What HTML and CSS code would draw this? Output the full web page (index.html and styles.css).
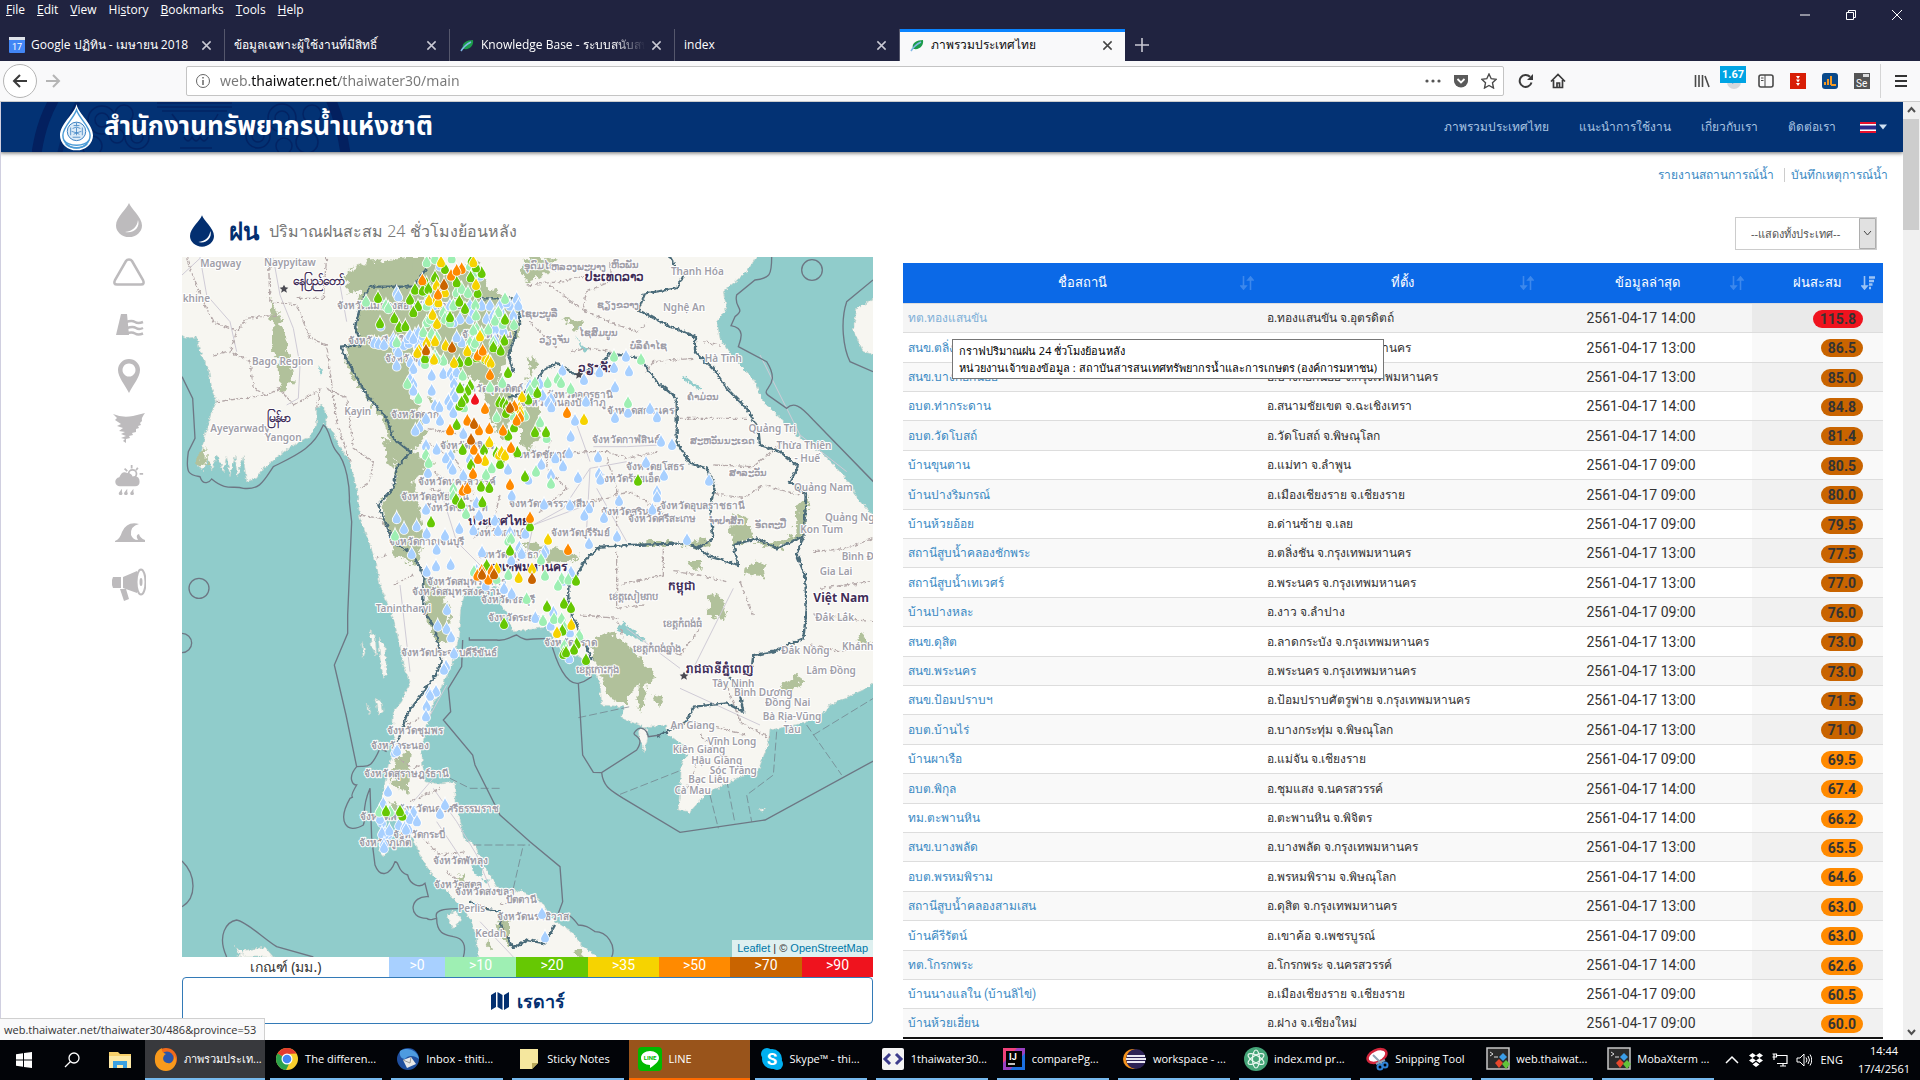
FILE: index.html
```html
<!DOCTYPE html>
<html lang="th">
<head>
<meta charset="utf-8">
<title>ภาพรวมประเทศไทย</title>
<link rel="stylesheet" href="styles.css">
</head>
<body>
<svg class="defs" width="0" height="0" aria-hidden="true">
  <symbol id="drop" viewBox="0 0 26 34"><path d="M13 0C15 6 26 14 26 22.500A13 11.500 0 0 1 0 22.500C0 14 11 6 13 0Z" fill="currentColor"/><path d="M22 17C24.500 24 18 31 9 29C17 28 21 24 22 17Z" fill="#fff"/></symbol>
  <symbol id="close" viewBox="0 0 12 12"><path d="M1.500 1.500l9 9M10.500 1.500l-9 9" fill="none" stroke="currentColor" stroke-width="1.600"/></symbol>
  <symbol id="leaf" viewBox="0 0 16 16"><path d="M4 12C2 6 8 3 14 3C15 8 11 13 5 12Z" fill="#1c9c4a"/><path d="M2 14C5 9 8 7 12 5" stroke="#7fb7e6" stroke-width="1.500" fill="none"/></symbol>
  <symbol id="sort" viewBox="0 0 14 14"><path d="M3.500 0v11M1 10l2.500 3L6 10ZM10.500 14V3M8 4l2.500-3L13 4Z" fill="currentColor" stroke="currentColor" stroke-width="1.600"/></symbol>
  <symbol id="sort-desc" viewBox="0 0 14 14"><path d="M3.500 0v11M1 10l2.500 3L6 10Z" fill="currentColor" stroke="currentColor" stroke-width="1.600"/><path d="M8 1.500h6M8 5h5M8 8.500h3.500M8 12h2" stroke="currentColor" stroke-width="2.400"/></symbol>
  <symbol id="moba" viewBox="0 0 24 24"><rect x="1" y="1" width="22" height="21" fill="#2b2b2b" stroke="#c8c8c8" stroke-width="1.500"/><path d="M4 5l3 2-3 2M8 10h4" stroke="#ddd" fill="none"/><path d="M17 6l4 4-4 4-4-4Z" fill="#3a9de8"/><path d="M13 12l4 4-4 5-4-5Z" fill="#e8472b"/><path d="M20 13l4 4-4 5-4-5Z" fill="#61c33a"/></symbol>
</svg>

<header class="browser">
  <div class="titlebar">
    <nav class="menus"><a href="#"><u>F</u>ile</a><a href="#"><u>E</u>dit</a><a href="#"><u>V</u>iew</a><a href="#">Hi<u>s</u>tory</a><a href="#"><u>B</u>ookmarks</a><a href="#"><u>T</u>ools</a><a href="#"><u>H</u>elp</a></nav>
    <div class="window-controls">
      <button aria-label="Minimize"><svg viewBox="0 0 12 12"><path d="M1 6h10" stroke="#fff"/></svg></button>
      <button aria-label="Restore"><svg viewBox="0 0 12 12"><path d="M1.500 3.500h7v7h-7zM3.500 3.500v-2h7v7h-2" fill="none" stroke="#fff"/></svg></button>
      <button aria-label="Close"><svg viewBox="0 0 12 12"><path d="M1 1l10 10M11 1L1 11" stroke="#fff"/></svg></button>
    </div>
  </div>
  <div class="tabs">
    <div class="tab"><svg viewBox="0 0 16 16"><rect width="16" height="16" rx="1" fill="#4286f5"/><rect width="16" height="3" fill="#dfe3ea"/><text x="8" y="13" font-size="9" text-anchor="middle" fill="#fff" font-family="Roboto">17</text></svg><span>Google ปฏิทิน - เมษายน 2018</span><button aria-label="Close tab"><svg><use href="#close"/></svg></button></div>
    <div class="tab"><span>ข้อมูลเฉพาะผู้ใช้งานที่มีสิทธิ์</span><button aria-label="Close tab"><svg><use href="#close"/></svg></button></div>
    <div class="tab"><svg><use href="#leaf"/></svg><span class="fade">Knowledge Base - ระบบสนับสนุน</span><button aria-label="Close tab"><svg><use href="#close"/></svg></button></div>
    <div class="tab"><span>index</span><button aria-label="Close tab"><svg><use href="#close"/></svg></button></div>
    <div class="tab active"><svg><use href="#leaf"/></svg><span>ภาพรวมประเทศไทย</span><button aria-label="Close tab"><svg><use href="#close"/></svg></button></div>
    <button class="new-tab" aria-label="New tab"><svg viewBox="0 0 14 14"><path d="M7 0v14M0 7h14" stroke="#c9c9d3" stroke-width="1.600"/></svg></button>
  </div>
  <div class="toolbar">
    <button class="back" aria-label="Back"><svg viewBox="0 0 16 16"><path d="M15 8H2M8 2L2 8l6 6" fill="none" stroke="#3b3b3b" stroke-width="2"/></svg></button>
    <button class="forward" aria-label="Forward"><svg viewBox="0 0 16 16"><path d="M1 8h13M8 2l6 6-6 6" fill="none" stroke="#b5b5b5" stroke-width="2"/></svg></button>
    <div class="urlbar">
      <svg viewBox="0 0 16 16"><circle cx="8" cy="8" r="6.500" fill="none" stroke="#666"/><path d="M8 7v5M8 4v1.500" stroke="#666" stroke-width="1.500"/></svg>
      <input class="url" aria-label="Address" value="web.thaiwater.net/thaiwater30/main">
      <svg viewBox="0 0 16 16"><g fill="#555"><circle cx="2" cy="8" r="1.600"/><circle cx="8" cy="8" r="1.600"/><circle cx="14" cy="8" r="1.600"/></g></svg>
      <svg viewBox="0 0 16 16"><path d="M1 2h14v6a7 6.500 0 0 1-14 0Z" fill="#5a5a5a"/><path d="M4.500 6L8 9.500 11.500 6" fill="none" stroke="#fff" stroke-width="1.800"/></svg>
      <svg viewBox="0 0 16 16"><path d="M8 1l2.200 4.700 5 .600-3.700 3.500 1 5.200L8 12.500 3.500 15l1-5.200L.800 6.300l5-.600Z" fill="none" stroke="#4a4a4a" stroke-width="1.400"/></svg>
    </div>
    <button aria-label="Reload"><svg viewBox="0 0 16 16"><path d="M13.500 9.500A6 6 0 1 1 12 3.700" fill="none" stroke="#3b3b3b" stroke-width="2"/><path d="M15 1v6H9Z" fill="#3b3b3b"/></svg></button>
    <button aria-label="Home"><svg viewBox="0 0 16 16"><path d="M1 8.500L8 1.500l7 7M3.500 7v7.500h9V7M7 14v-4h2.500v4" fill="none" stroke="#3b3b3b" stroke-width="1.700"/></svg></button>
    <div class="extensions">
      <button aria-label="Library"><svg viewBox="0 0 16 16"><path d="M1.500 2v12M5 2v12M8.500 2v12M11 3l4 11" stroke="#4a4a4a" stroke-width="1.600" fill="none"/></svg></button>
      <button class="counter" aria-label="Page rank"><svg viewBox="0 0 16 16"><circle cx="8" cy="9" r="7" fill="#d5d8dc"/><path d="M6 10l4-3" stroke="#3b8ad0" stroke-width="2"/></svg><b>1.67</b></button>
      <button aria-label="Sidebar"><svg viewBox="0 0 16 16"><rect x="1" y="2" width="14" height="12" rx="2" fill="none" stroke="#4a4a4a" stroke-width="1.600"/><path d="M7 2v12M3 5h2.500M3 7.500h2.500" stroke="#4a4a4a"/></svg></button>
      <button aria-label="Flash"><svg viewBox="0 0 16 16"><path d="M0 0h16v16H0z" fill="#d81e06"/><path d="M6 3h4L8 6ZM6 6.500h4L8 9.500ZM6 10h4l-2 3Z" fill="#fff"/></svg></button>
      <button aria-label="Rank chart"><svg viewBox="0 0 16 16"><rect width="16" height="16" rx="3" fill="#0b4a8a"/><path d="M3 12V9M6 12V6M9 12V3M9 12h5" stroke="#f59a23" stroke-width="2" fill="none"/></svg></button>
      <button aria-label="Selenium"><svg viewBox="0 0 16 16"><path d="M0 0h16v16H0z" fill="#555"/><path d="M9 1h6v3H9z" fill="#ddd"/><text x="2" y="14" font-size="10" fill="#fff" font-family="Roboto">Se</text></svg></button>
      <button class="menu-btn" aria-label="Menu"><svg viewBox="0 0 16 16"><path d="M2 3h12M2 8h12M2 13h12" stroke="#333" stroke-width="2"/></svg></button>
    </div>
  </div>
</header>

<main class="viewport">
  <div class="page">
    <header class="site-header">
      <svg class="emblem" viewBox="0 0 330 50"><g fill="none" stroke="#03205f"><path d="M4 55C8 25 16 8 24 -6M314 55C310 25 304 8 297 -6" stroke-width="10"/><path d="M27 55C32 30 38 15 46 0" stroke-width="5" opacity=".7"/><g stroke-width="1.500" opacity=".8"><circle cx="70" cy="18" r="14"/><circle cx="92" cy="12" r="9"/><circle cx="70" cy="18" r="7"/><circle cx="105" cy="35" r="12"/><circle cx="105" cy="35" r="6"/><circle cx="60" cy="44" r="10"/><circle cx="85" cy="34" r="7"/><circle cx="250" cy="16" r="14"/><circle cx="250" cy="16" r="7"/><circle cx="226" cy="34" r="12"/><circle cx="226" cy="34" r="6"/><circle cx="275" cy="40" r="11"/><circle cx="252" cy="44" r="8"/><circle cx="280" cy="12" r="9"/><path d="M125 1h75M125 5h75M130 9h65M140 12q10 16 24 18 14-2 22-18M150 30h28M152 35q4 8 8 0 4 8 8 0 4 8 8 0M148 46h32"/></g></g></svg>
      <a class="brand" href="#">
        <svg viewBox="0 0 36 48"><path d="M18 0C20 10 35 20 35 32A17 15.500 0 0 1 1 32C1 20 16 10 18 0Z" fill="#fff"/><path d="M18 6C21 15 32 23 32 32A14 13 0 0 1 4 32C4 23 15 15 18 6Z" fill="none" stroke="#4b9bd6" stroke-width="1.500"/><circle cx="18" cy="28" r="9.500" fill="#dcebf8" stroke="#3a7fc0"/><path d="M18 19v3M15 22h6M14 25q4-3 8 0M13 28q5 3 10 0M15 31q3-3 6 0M14 34h8M12 24v8M24 24v8M18 24v8" stroke="#3a7fc0" fill="none" stroke-width=".800"/><path d="M5 37c5 7 21 7 26 0M7 41c5 5 17 5 22 0" stroke="#4b9bd6" stroke-width="1.600" fill="none"/></svg>
        <span>สำนักงานทรัพยากรน้ำแห่งชาติ</span>
      </a>
      <nav class="site-nav"><a href="#">ภาพรวมประเทศไทย</a><a href="#">แนะนำการใช้งาน</a><a href="#">เกี่ยวกับเรา</a><a href="#">ติดต่อเรา</a>
        <button class="lang" aria-label="ภาษา"><svg viewBox="0 0 28 11"><path d="M0 0h16v11H0z" fill="#e8112d"/><path d="M0 2h16v7H0z" fill="#fff"/><path d="M0 3.500h16v4H0z" fill="#2d2a8c"/><path d="M19 2.500h8l-4 5Z" fill="#cfe0f2"/></svg></button>
      </nav>
    </header>
    <nav class="quick-links"><a href="#">รายงานสถานการณ์น้ำ</a><a href="#">บันทึกเหตุการณ์น้ำ</a></nav>

    <div class="content">
      <nav class="rail">
        <a href="#" aria-label="ฝน"><svg class="tall" viewBox="0 0 26 34"><use href="#drop"/></svg></a>
        <a href="#" aria-label="เตือนภัย"><svg viewBox="0 0 34 30"><path d="M17 2.500Q19 2.500 20 4L31 23Q33 27.500 29 27.500H5Q1 27.500 3 23L14 4Q15 2.500 17 2.500Z" fill="none" stroke="currentColor" stroke-width="2.500"/></svg></a>
        <a href="#" aria-label="เขื่อน"><svg viewBox="0 0 34 30"><path d="M9 5h6l2 21H4Z" fill="currentColor"/><path d="M14 13q6-2 9 0t8 0M15 19q6-2 9 0t7 0M14 24.500q6-2 9 0t8 0" stroke="currentColor" stroke-width="2.500" fill="none"/></svg></a>
        <a href="#" aria-label="สถานี"><svg class="tall" viewBox="0 0 26 34"><path d="M13 0A11 11 0 0 1 24 11C24 18 17 26 13 34C9 26 2 18 2 11A11 11 0 0 1 13 0ZM13 4.500a6.500 6.500 0 1 0 .01 0Z" fill="currentColor" fill-rule="evenodd"/></svg></a>
        <a href="#" aria-label="พายุ"><svg viewBox="0 0 34 30"><path d="M1 1Q10 5 21 3L33 0Q29 5 30 8L28 10 29 12 26 13 27 15 24 16 24 19 20 20 21 22 17 23 18 25 14 26 14 30 11 28 13 26 9 25 14 23 9 21 13 19 7 18 11 15 5 13 9 11 3 7 5 5Z" fill="currentColor"/></svg></a>
        <a href="#" aria-label="คาดการณ์ฝน"><svg viewBox="0 0 34 34"><circle cx="21" cy="10" r="4.500" fill="none" stroke="currentColor" stroke-width="2"/><path d="M20 0v4M27 3l-2 3M29 10h4M12 4l3 3" stroke="currentColor" stroke-width="2"/><path d="M7 24A5 5 0 0 1 6 14Q9 6 15 9Q20 9 21 13Q29 12 29 19Q29 24 24 24ZM9 27v4a2 2 0 1 1-3 0ZM15 27v4a2 2 0 1 1-3 0ZM22 27v4a2 2 0 1 1-3 0Z" fill="currentColor"/></svg></a>
        <a href="#" aria-label="คลื่น"><svg viewBox="0 0 34 30"><path d="M3 24Q8 22 10 15Q15 4 27 7Q18 9 19 18Q21 23 26 23Q23 18 27 17Q28 21 33 23v2H3Z" fill="currentColor"/></svg></a>
        <a href="#" aria-label="ประกาศ"><svg class="tall" viewBox="0 0 34 34"><path d="M1 10h8v11H1l-1-3v-5ZM11 10L25 4V26L11 21ZM8 22h6l3 10-5 2Z" fill="currentColor"/><ellipse cx="29" cy="15" rx="4.500" ry="12.500" fill="none" stroke="currentColor" stroke-width="2"/><ellipse cx="29" cy="15" rx="1.500" ry="4" fill="currentColor"/></svg></a>
      </nav>

      <section class="map-col">
        <h1 class="map-title"><svg><use href="#drop"/></svg><b>ฝน</b><small>ปริมาณฝนสะสม 24 ชั่วโมงย้อนหลัง</small></h1>
        <div class="map">
          <svg class="map-art" viewBox="6 6 2073 2100" preserveAspectRatio="xMidYMid slice">
            <defs>
              <filter id="coast" x="0" y="0" width="100%" height="100%"><feTurbulence type="fractalNoise" baseFrequency=".09" numOctaves="3" seed="4"/><feDisplacementMap in="SourceGraphic" scale="14" xChannelSelector="R" yChannelSelector="G"/></filter>
              <filter id="patch" x="-10%" y="-10%" width="120%" height="120%"><feTurbulence type="fractalNoise" baseFrequency=".05" numOctaves="4" seed="9"/><feDisplacementMap in="SourceGraphic" scale="36" xChannelSelector="R" yChannelSelector="G"/></filter>
              <path id="marker" d="M0-18C3-9 12-1 12 6A12 11 0 0 1-12 6C-12-1-3-9 0-18Z"/>
            </defs>
            <g filter="url(#coast)">
              <path class="land" d="M-40-40H-40V210L20 250 50 245 60 290 85 340 95 400 110 440 95 470 75 540 65 590 52 630 70 645 85 610 95 645 110 600 130 650 140 605 150 665 165 600 172 668 190 605 200 680 230 670 250 640 270 625 330 575 390 545 410 510 410 460 425 450 440 480 435 510 460 530 470 560 490 590 510 620 530 700 540 790 555 830 570 870 590 930 600 990 620 1040 640 1090 660 1170 670 1230 690 1280 665 1340 640 1370 638 1430 652 1475 625 1530 612 1600 600 1660 606 1715 640 1660 670 1730 700 1750 720 1800 750 1850 800 1910 850 1960 875 2000 890 2050 895 2140H1290L1255 2106 1210 2075 1170 2025 1125 2000 1080 1935 1020 1905 1000 1912 950 1895 930 1860 905 1820 885 1770 850 1750 840 1690 825 1640 825 1580 780 1587 735 1580 728 1530 725 1480 740 1415 755 1355 795 1275 820 1215 835 1155 842 1065 855 1010 875 1000 945 995 972 1010 962 1050 985 1080 1000 1130 1100 1117 1130 1165 1170 1195 1220 1215 1260 1280 1265 1350 1330 1355 1325 1390 1390 1415 1460 1410 1460 1435 1530 1485 1505 1525 1495 1665 1530 1670 1580 1615 1660 1575 1735 1545 1765 1465 1770 1425 1870 1405 1930 1375 1950 1350 2060 1300 2120 1250V800L2080 780 2040 740 1990 660 1920 590 1860 550 1780 470 1750 440 1720 370 1670 320 1620 250 1610 200 1640 160 1630 110 1700 50 1760-40Z"/>
              <path class="land" d="M2120 110L2075 135 2030 160 2020 225 2050 290 2120 305ZM600 1735l20 5 5 35-12 30-14-15ZM170 2106l25-20 60-10 25 30ZM165 2070l20 20 8 16h-10ZM1375 1425l25-5 3 30-10 40-15-35ZM570 1130l15 10 5 60-15-20ZM595 1150l20 20 5 90-10 10-10-60ZM545 1160l10 30-5 20ZM585 1330l20 10 5 30-15 10ZM562 1345l10 25-5 10ZM800 1985l25-20 20 30-25 25ZM1735 1665l20-8-8 12Z"/>
              <path class="water" d="M415 330l12 20-5 12ZM1185 240l20 30 25 15-20 5ZM1510 360l60 45-20-5-45-30ZM1330 1100l70 60-20-5-70-30ZM870 1810l40 15-5 40-25-10ZM905 1870l25 5-10 10Z"/>
            </g>
            <g class="forest" filter="url(#patch)">
              <path d="M540 90L600 60 690 40 690 6H780L800 60 900 20 925 100 1010 140 1020 220 980 300 960 380 1000 440 980 560 940 520 900 380 840 360 760 290 700 250 690 400 720 470 740 560 690 590 760 620 700 680 720 760 730 840 710 930 640 900 640 850 600 770 610 740 640 700 650 640 630 560 600 480 540 400 500 330 500 270 540 260 530 200Z"/>
              <path d="M265 130L295 170 320 260 335 350 340 390 300 410 295 310 270 280 280 210ZM500 50L560 20 700 8 690 80 560 100 500 120ZM610 545L650 580 640 640 620 620ZM55 590l25-10v45l-25 10ZM730 970l40 0 40 100-5 90-30 10-40-80 5-60ZM1020 430l50-20 10 120-30 60-30-20ZM1020 860l60 10 120 30-30 25-90-10ZM1025 10h110l-40 50-60 20ZM1150 190l60 10-20 30ZM1050 300l20 20-30 70ZM1720 865l70 20 80-45 15-120-30 30-10 90-60 20ZM1650 775l50 10 20 60-60 30ZM1520 915l40 0 10 25-30 5ZM1700 930l50-5 5 40-60-10ZM1590 1010l40 30 10 50-60-10ZM1230 1160l60-30 80 60 60 80-60 20-30 60-50-20-40-90ZM1380 1260l20 20-10 100-20-30ZM1800 1290l50-30 20 30-60 30ZM650 1500l45 0-10 120-50-40ZM670 1470l20 30-10 40ZM630 1640l30 20-10 30ZM830 1870l20-20 10 30ZM950 1980l40 20 0 80-30-40ZM1190 2085h20v25h-20ZM1420 1320l30 10-10 30ZM2030 1140l20-5 20 40-30-5ZM1500 870l80-20 10 20-70 10ZM1380 860l90-5v15h-90ZM800 550l30 40-30-10ZM750 420l30 60-20-10ZM930 2050l10 40-20-20Z"/>
            </g>
            <g class="roads"><path d="M280 10L300 120 340 220 360 330 355 430 320 450M6 60L60 10M60 6L80 120 150 200 170 290M950 960L1040 900 1060 810 1220 750M1240 575H1340L1440 570M1230 640L1220 820M1060 810L1150 760 1230 640 1340 620M1340 860L1250 700M760 1600L830 1700 890 1800 930 1900M700 1640L760 1570M770 1700L850 1820M1500 1300L1740 1410M1530 1260L1660 1000M1740 300L1860 540 2000 650M660 990L690 1250M800 1290L740 1400M900 2000L1000 2106M480 90L500 200M780 700L830 860 930 960M1340 1120L1500 1240M1180 480L1230 620"/></g>
            <g class="provinces" filter="url(#coast)"><path d="M20 10L60 120 100 200 170 230 200 190 290 180M170 230L150 290 210 320 220 400 260 420 300 400 340 450 410 410M265 6L270 140 350 150 390 250 440 270 470 500 510 620M350 130L430 130 440 6M440 400L500 430 520 580 580 620 570 680 540 700M100 300L140 290M260 420L110 440M540 780L600 790 620 820M410 460L420 400M390 70L440 90M1110 90L1200 160 1310 210 1370 230 1400 205M1210 160L1220 110 1290 80 1290 20M1040 90L1140 80 1230 60M1170 290L1230 280 1300 290M1400 350L1420 320 1540 310M1490 490H1700M1600 630L1720 635 1810 560M1600 715L1690 730 1750 690 1860 720M1110 600L1220 590 1280 590 1340 610 1440 590M1280 610L1310 700 1310 860M1110 550L1100 640 1160 700 1080 770M1230 740L1350 710 1430 760 1480 800M1450 880V960L1320 990M1310 890V1060L1390 1050M1480 950L1560 960 1640 980M1560 1120L1500 1200 1440 1170M1680 980L1720 1080M1200 1080L1310 1090 1330 1150M1900 890L2000 880 2080 850M1920 1000L2070 980M1900 1080L2080 1100M1890 1170L1980 1190 2080 1160M1540 1400L1700 1440M1560 1440L1700 1560M1560 1500L1520 1600M1640 1290L1680 1400 1770 1450M740 560L830 620 880 720M760 650L830 700M700 960L640 990M750 700L880 740M680 1410L720 1390M640 1500L700 1540 720 1530M690 1640L780 1600M720 1740L780 1800 860 1790M800 1850L860 1900M960 1950L1050 1930M1050 200L1130 280M1570 260L1620 270M740 520L850 540M960 720L940 800 880 850M620 900L590 910"/></g>
            <g class="nations" filter="url(#coast)"><path d="M740 40L700 95 570 95 545 140 525 215 545 270 480 275 520 350 560 420 620 490 640 550 690 590 650 640 640 700 595 750 640 860 700 900 730 960 730 1065 765 1120 785 1220 770 1255 680 1380 650 1470M900 130L1015 130 1020 200 985 300 1000 350M985 430L1060 400 1090 345 1130 325 1190 360 1260 330 1290 295 1380 310 1430 380 1490 430 1490 560 1530 625 1580 640 1605 690 1590 760 1600 850 1555 880 1520 865 1350 870 1260 875 1220 910 1190 960 1165 990 1165 1060 1200 1130 1235 1215M1555 880L1590 905 1640 920 1675 930 1660 870 1730 850 1790 880 1870 845 1850 900 1875 960 1880 1065 1870 1150 1780 1190 1720 1200 1715 1240M1640 1250L1680 1320 1690 1370 1640 1345 1540 1355 1520 1400 1430 1445M1470 6L1490 40 1510 60 1490 100 1395 115 1375 165 1460 210 1545 245 1545 290 1600 340 1640 400 1700 460 1735 520 1740 570 1800 590 1855 635 1830 680 1880 720 1870 845M870 1940L910 1960 960 1970 965 2020 1000 2080 1040 2055 1095 2065 1125 2010"/></g>
            <g class="maritime">
              <path d="M6 365L38 430 45 550 25 590C15 660 30 660 60 665C70 695 90 680 95 672C140 710 160 690 190 700C240 705 250 680 280 635C350 600 400 580 430 510C450 520 450 570 470 590C500 620 510 700 508 740L515 800 503 1080V1135L463 1230 498 1380 530 1535C560 1530 570 1550 600 1480L620 1490M530 1535C500 1570 520 1590 530 1590C500 1640 530 1620 510 1630C470 1700 500 1740 550 1710C560 1690 540 1670 570 1600L575 1750 585 1830C600 1870 630 1860 645 1820C660 1820 650 1850 683 1860C690 1890 720 1900 735 1885L745 1925C690 1920 680 1990 740 1990C750 2000 760 1990 770 1990C770 2040 800 2040 820 2045C850 2050 860 2070 850 2106M770 1990C760 1960 800 1960 880 1960M140 2106C110 2040 140 2000 170 1995C200 2000 250 2050 290 2075L400 2106M6 1818C50 1860 50 1930 6 1955M868 1147V1155H950C980 1160 1000 1140 1010 1140C1030 1155 1040 1155 1060 1152L1110 1150C1130 1230 1160 1290 1195 1285C1220 1280 1225 1270 1235 1265M1195 1285L1208 1500 1240 1552 1265 1553 1370 1485C1400 1440 1350 1445 1365 1430C1380 1410 1400 1420 1405 1445L1440 1440M1265 1553C1270 1600 1300 1610 1330 1630L1500 1732 1755 1695 2080 1518M848 1155L845 1235 805 1300 812 1370 790 1395 878 1500 885 1530 960 1680 1050 1760 1140 1835 1148 1940 1135 1975C1170 1975 1180 1990 1195 2010C1220 2010 1230 2020 1245 2030C1280 2030 1310 2070 1295 2106"/>
              <path d="M1775 6C1775 60 1770 70 1725 75L1670 120C1660 160 1700 160 1665 185L1653 212C1700 220 1680 260 1675 275L1760 320C1810 400 1730 400 1770 425L1820 460C1840 440 1860 450 1900 495L2080 680M2079 75L2000 140C1980 200 1990 280 2010 320L2079 350"/>
              <circle cx="57" cy="1000" r="30"/><circle cx="1896" cy="45" r="31"/><path d="M6 1135a28 28 0 0 1 0 58"/>
              <path class="dash" d="M1195 1388L1350 1355M1320 1618L1500 1547M1640 1575L1665 1705M1590 1620L1615 1720M1790 1430L1780 1560 1700 1620 1715 1700M1880 1410L1985 1560M1900 1440L2080 1330M810 1570L870 1600 960 1600M880 1770L1050 1770M1000 1900L1030 1770"/>
            </g>
            <g class="labels">
              <text x="122" y="36">Magway</text><text x="330" y="34">Naypyitaw</text><text x="8" y="142" text-anchor="start">khine</text><text x="308" y="329">Bago Region</text><text x="180" y="531">Ayeyarwady</text><text x="310" y="557">Yangon</text><text x="533" y="480">Kayin</text><text x="670" y="1070">Tanintharyi</text>
              <text x="1552" y="60">Thanh Hóa</text><text x="1512" y="169">Nghệ An</text><text x="1630" y="322">Hà Tĩnh</text><text x="1777" y="531">Quảng Trị</text><text x="1872" y="582">Thừa Thiên</text><text x="1882" y="621">- Huế</text><text x="1930" y="708">Quảng Nam</text><text x="1935" y="798" class="start">Quảng Ng</text><text x="1925" y="834">Kon Tum</text><text x="1985" y="914" class="start">Bình Đ</text><text x="1968" y="960">Gia Lai</text><text x="1964" y="1098">Đắk Lắk</text><text x="1876" y="1196">Đắk Nông</text><text x="1986" y="1186" class="start">Khánh</text><text x="1953" y="1257">Lâm Đồng</text><text x="1660" y="1296">Tây Ninh</text><text x="1750" y="1322">Bình Dương</text><text x="1823" y="1353">Đồng Nai</text><text x="1836" y="1395">Bà Rịa-Vũng</text><text x="1836" y="1434">Tàu</text><text x="1538" y="1421">An Giang</text><text x="1656" y="1471">Vĩnh Long</text><text x="1557" y="1494">Kiên Giang</text><text x="1610" y="1527">Hậu Giang</text><text x="1660" y="1558">Sóc Trăng</text><text x="1586" y="1584">Bạc Liêu</text><text x="1538" y="1616">Cà Mau</text><text x="875" y="1972">Perlis</text><text x="932" y="2047">Kedah</text>
              <text x="590" y="162">จังหวัดแม่ฮ่องสอน</text><text x="810" y="162">จังหวัดเชียงราย</text><text x="610" y="266">จังหวัดเชียงใหม่</text><text x="700" y="322">จังหวัดลำพูน</text><text x="920" y="250">จังหวัดน่าน</text><text x="930" y="412">จังหวัดอุตรดิตถ์</text><text x="704" y="490">จังหวัดตาก</text><text x="862" y="582">จังหวัดพิจิตร</text><text x="830" y="690">จังหวัดนครสวรรค์</text><text x="765" y="734">จังหวัดอุทัยธานี</text><text x="830" y="768">จังหวัดชัยนาท</text><text x="740" y="870">จังหวัดกาญจนบุรี</text><text x="960" y="842">จังหวัดลพบุรี</text><text x="995" y="908">จังหวัดปทุมธานี</text><text x="860" y="990">จังหวัดสมุทรสาคร</text><text x="833" y="1020">จังหวัดสมุทรสงคราม</text><text x="985" y="1044">จังหวัดชลบุรี</text>
              <text x="1200" y="429">จังหวัดอุดรธานี</text><text x="1150" y="454">จังหวัดหนองบัวลำภู</text><text x="1382" y="478">จังหวัดสกลนคร</text><text x="1338" y="563">จังหวัดกาฬสินธุ์</text><text x="1080" y="608">จังหวัดชัยภูมิ</text><text x="1424" y="645">จังหวัดยโสธร</text><text x="1348" y="682">จังหวัดร้อยเอ็ด</text><text x="1115" y="756">จังหวัดนครราชสีมา</text><text x="1566" y="761">จังหวัดอุบลราชธานี</text><text x="1354" y="780">จังหวัดสุรินทร์</text><text x="1446" y="800">จังหวัดศรีสะเกษ</text><text x="1200" y="842">จังหวัดบุรีรัมย์</text><text x="1172" y="1173">จังหวัดตราด</text><text x="1010" y="1098">จังหวัดระยอง</text>
              <text x="806" y="1204">จังหวัดประจวบคีรีขันธ์</text><text x="704" y="1436">จังหวัดชุมพร</text><text x="660" y="1481">จังหวัดระนอง</text><text x="680" y="1565">จังหวัดสุราษฎร์ธานี</text><text x="806" y="1670">จังหวัดนครศรีธรรมราช</text><text x="620" y="1694">จังหวัดพังงา</text><text x="716" y="1750">จังหวัดกระบี่</text><text x="615" y="1773">จังหวัดภูเก็ต</text><text x="840" y="1826">จังหวัดพัทลุง</text><text x="834" y="1898">จังหวัดสตูล</text><text x="914" y="1920">จังหวัดสงขลา</text><text x="1025" y="1945">ปัตตานี</text><text x="1060" y="1996">จังหวัดนราธิวาส</text>
              <text x="1080" y="42">ອຸດົມໄຊ</text><text x="1195" y="44">ຫລວງພະບາງ</text><text x="1335" y="38">ຫົວພັນ</text><text x="1314" y="160">ຊຽງຂວາງ</text><text x="1076" y="185">ໄຊຍະບູລີ</text><text x="1124" y="264">ວຽງຈັນ</text><text x="1256" y="242">ໄຊສົມບູນ</text><text x="1406" y="282">ບໍລິຄຳໄຊ</text><text x="1570" y="436">ຄຳມ່ວນ</text><text x="1627" y="568">ສະຫວັນນະເຂດ</text><text x="1705" y="664">ສາລະວັນ</text><text x="1638" y="808">ຈຳປາສັກ</text><text x="1770" y="818">ອັດຕະປື</text>
              <text x="1360" y="1034">ខេត្តសៀមរាប</text><text x="1507" y="1117">ខេត្តកំពង់ធំ</text><text x="1432" y="1190">ខេត្តកំពង់ឆ្នាំង</text><text x="1252" y="1254">ខេត្តកោះកុង</text>
              <g class="country"><text x="415" y="90">နေပြည်တော်</text><text x="296" y="500">မြန်မာ</text><text x="1302" y="77">ປະເທດລາວ</text><text x="1252" y="350">ວຽງຈັນ</text><text x="955" y="809">ประเทศไทย</text><text x="1035" y="947">กรุงเทพมหานคร</text><text x="1506" y="1004">កម្ពុជា</text><text x="1617" y="1253">រាជធានីភ្នំពេញ</text><text x="1900" y="1040" class="start">Việt Nam</text></g>
            </g>
            <g class="stars"><path id="star" d="M312 89l4 8 9 1-7 6 3 9-9-5-9 5 3-9-7-6 9-1Z"/><use href="#star" x="885" y="258"/><use href="#star" x="1200" y="1161"/></g>
            <g id="markers"></g>
          </svg>
          <p class="attribution"><a href="#">Leaflet</a> | © <a href="#">OpenStreetMap</a></p>
        </div>
        <div class="legend"><span>เกณฑ์ (มม.)</span><i class="l0">&gt;0</i><i class="l10">&gt;10</i><i class="l20">&gt;20</i><i class="l35">&gt;35</i><i class="l50">&gt;50</i><i class="l70">&gt;70</i><i class="l90">&gt;90</i></div>
        <button class="radar"><svg viewBox="0 0 18 18"><path d="M0 3l5-3v15l-5 3ZM6.500 0l5 3v15l-5-3ZM13 3l5-3v15l-5 3Z" fill="currentColor"/></svg>เรดาร์</button>
      </section>

      <section class="data-col">
        <div class="filter"><select aria-label="จังหวัด"><option>--แสดงทั้งประเทศ--</option></select><svg viewBox="0 0 17 31"><path d="M.500.500h16v30H.500z" fill="#e1e1e1" stroke="#adadad"/><path d="M5 13l3.500 4 3.500-4" fill="none" stroke="#444"/></svg></div>
        <div class="table-wrap">
          <table>
            <colgroup><col class="c1"><col class="c2"><col class="c3"><col class="c4"></colgroup>
            <thead><tr>
              <th><button><span>ชื่อสถานี</span><svg><use href="#sort"/></svg></button></th>
              <th><button><span>ที่ตั้ง</span><svg><use href="#sort"/></svg></button></th>
              <th><button><span>ข้อมูลล่าสุด</span><svg><use href="#sort"/></svg></button></th>
              <th><button class="sorted"><span>ฝนสะสม</span><svg><use href="#sort-desc"/></svg></button></th>
            </tr></thead>
            <tbody>
              <tr class="hover"><td><a href="#">ทต.ทองแสนขัน</a></td><td>อ.ทองแสนขัน จ.อุตรดิตถ์</td><td>2561-04-17 14:00</td><td><b class="l90">115.8</b></td></tr>
              <tr><td><a href="#">สนข.ตลิ่งชัน</a></td><td>อ.ตลิ่งชัน จ.กรุงเทพมหานคร</td><td>2561-04-17 13:00</td><td><b class="l70">86.5</b></td></tr>
              <tr><td><a href="#">สนข.บางกอกน้อย</a></td><td>อ.บางกอกน้อย จ.กรุงเทพมหานคร</td><td>2561-04-17 13:00</td><td><b class="l70">85.0</b></td></tr>
              <tr><td><a href="#">อบต.ท่ากระดาน</a></td><td>อ.สนามชัยเขต จ.ฉะเชิงเทรา</td><td>2561-04-17 14:00</td><td><b class="l70">84.8</b></td></tr>
              <tr><td><a href="#">อบต.วัดโบสถ์</a></td><td>อ.วัดโบสถ์ จ.พิษณุโลก</td><td>2561-04-17 14:00</td><td><b class="l70">81.4</b></td></tr>
              <tr><td><a href="#">บ้านขุนตาน</a></td><td>อ.แม่ทา จ.ลำพูน</td><td>2561-04-17 09:00</td><td><b class="l70">80.5</b></td></tr>
              <tr><td><a href="#">บ้านปางริมกรณ์</a></td><td>อ.เมืองเชียงราย จ.เชียงราย</td><td>2561-04-17 09:00</td><td><b class="l70">80.0</b></td></tr>
              <tr><td><a href="#">บ้านห้วยอ้อย</a></td><td>อ.ด่านซ้าย จ.เลย</td><td>2561-04-17 09:00</td><td><b class="l70">79.5</b></td></tr>
              <tr><td><a href="#">สถานีสูบน้ำคลองชักพระ</a></td><td>อ.ตลิ่งชัน จ.กรุงเทพมหานคร</td><td>2561-04-17 13:00</td><td><b class="l70">77.5</b></td></tr>
              <tr><td><a href="#">สถานีสูบน้ำเทเวศร์</a></td><td>อ.พระนคร จ.กรุงเทพมหานคร</td><td>2561-04-17 13:00</td><td><b class="l70">77.0</b></td></tr>
              <tr><td><a href="#">บ้านปางหละ</a></td><td>อ.งาว จ.ลำปาง</td><td>2561-04-17 09:00</td><td><b class="l70">76.0</b></td></tr>
              <tr><td><a href="#">สนข.ดุสิต</a></td><td>อ.ลาดกระบัง จ.กรุงเทพมหานคร</td><td>2561-04-17 13:00</td><td><b class="l70">73.0</b></td></tr>
              <tr><td><a href="#">สนข.พระนคร</a></td><td>อ.พระนคร จ.กรุงเทพมหานคร</td><td>2561-04-17 13:00</td><td><b class="l70">73.0</b></td></tr>
              <tr><td><a href="#">สนข.ป้อมปราบฯ</a></td><td>อ.ป้อมปราบศัตรูพ่าย จ.กรุงเทพมหานคร</td><td>2561-04-17 13:00</td><td><b class="l70">71.5</b></td></tr>
              <tr><td><a href="#">อบต.บ้านไร่</a></td><td>อ.บางกระทุ่ม จ.พิษณุโลก</td><td>2561-04-17 13:00</td><td><b class="l70">71.0</b></td></tr>
              <tr><td><a href="#">บ้านผาเรือ</a></td><td>อ.แม่จัน จ.เชียงราย</td><td>2561-04-17 09:00</td><td><b class="l50">69.5</b></td></tr>
              <tr><td><a href="#">อบต.พิกุล</a></td><td>อ.ชุมแสง จ.นครสวรรค์</td><td>2561-04-17 14:00</td><td><b class="l50">67.4</b></td></tr>
              <tr><td><a href="#">ทม.ตะพานหิน</a></td><td>อ.ตะพานหิน จ.พิจิตร</td><td>2561-04-17 14:00</td><td><b class="l50">66.2</b></td></tr>
              <tr><td><a href="#">สนข.บางพลัด</a></td><td>อ.บางพลัด จ.กรุงเทพมหานคร</td><td>2561-04-17 13:00</td><td><b class="l50">65.5</b></td></tr>
              <tr><td><a href="#">อบต.พรหมพิราม</a></td><td>อ.พรหมพิราม จ.พิษณุโลก</td><td>2561-04-17 14:00</td><td><b class="l50">64.6</b></td></tr>
              <tr><td><a href="#">สถานีสูบน้ำคลองสามเสน</a></td><td>อ.ดุสิต จ.กรุงเทพมหานคร</td><td>2561-04-17 13:00</td><td><b class="l50">63.0</b></td></tr>
              <tr><td><a href="#">บ้านคีรีรัตน์</a></td><td>อ.เขาค้อ จ.เพชรบูรณ์</td><td>2561-04-17 09:00</td><td><b class="l50">63.0</b></td></tr>
              <tr><td><a href="#">ทต.โกรกพระ</a></td><td>อ.โกรกพระ จ.นครสวรรค์</td><td>2561-04-17 14:00</td><td><b class="l50">62.6</b></td></tr>
              <tr><td><a href="#">บ้านนางแลใน (บ้านลิไข่)</a></td><td>อ.เมืองเชียงราย จ.เชียงราย</td><td>2561-04-17 09:00</td><td><b class="l50">60.5</b></td></tr>
              <tr><td><a href="#">บ้านห้วยเฮี่ยน</a></td><td>อ.ฝาง จ.เชียงใหม่</td><td>2561-04-17 09:00</td><td><b class="l50">60.0</b></td></tr>
            </tbody>
          </table>
          <div class="tooltip" role="tooltip">กราฟปริมาณฝน 24 ชั่วโมงย้อนหลัง<br>หน่วยงานเจ้าของข้อมูล : สถาบันสารสนเทศทรัพยากรน้ำและการเกษตร (องค์การมหาชน)</div>
        </div>
      </section>
    </div>
  </div>
  <div class="scrollbar" aria-hidden="true"><svg viewBox="0 0 17 17"><path d="M5 10l3.500-4 3.500 4" fill="none" stroke="#505050" stroke-width="2"/></svg><span class="thumb"></span><svg class="down" viewBox="0 0 17 17"><path d="M5 7l3.500 4L12 7" fill="none" stroke="#505050" stroke-width="2"/></svg></div>
  <div class="status">web.thaiwater.net/thaiwater30/486&amp;province=53</div>
</main>

<footer class="taskbar">
  <button class="sys" aria-label="Start"><svg viewBox="0 0 16 16"><path d="M0 2.200l7-1v6.300H0ZM8 1l8-1v7.500H8ZM0 8.500h7v6.300l-7-1ZM8 8.500h8V16l-8-1Z" fill="#fff"/></svg></button>
  <button class="sys" aria-label="Search"><svg viewBox="0 0 16 16"><circle cx="10" cy="6" r="5" fill="none" stroke="#fff" stroke-width="1.300"/><path d="M6.500 9.500L1 15" stroke="#fff" stroke-width="1.300"/></svg></button>
  <button class="sys folder" aria-label="File Explorer"><svg viewBox="0 0 22 18"><path d="M0 1h9l2 2h11v14H0Z" fill="#f7d06b"/><path d="M0 5h22v12H0z" fill="#fde9a6"/><path d="M4 17v-7h14v7h-4v-3H8v3Z" fill="#3aa0e0"/></svg></button>
  <div class="apps">
    <button class="app current"><svg viewBox="0 0 24 24"><circle cx="12" cy="12" r="11" fill="#f26a1b"/><circle cx="13" cy="11" r="6.500" fill="#2c56a8"/><path d="M1 10C2 4 6 2 8 1C7 4 9 6 12 7C8 9 8 15 13 16C18 17 21 13 20 8C25 15 20 24 12 24C4 24 0 18 1 10Z" fill="#f89a1c"/></svg><span>ภาพรวมประเท...</span></button>
    <button class="app"><svg viewBox="0 0 24 24"><circle cx="12" cy="12" r="11" fill="#f9cf2c"/><path d="M12 12L2.500 6.500A11 11 0 0 1 21.500 6.500L12 7Z" fill="#e33b2e"/><path d="M12 12L2.500 6.500A11 11 0 0 0 11 23L15 15Z" fill="#2ba24c"/><circle cx="12" cy="12" r="5.500" fill="#fff"/><circle cx="12" cy="12" r="4.300" fill="#4285f4"/></svg><span>The differen...</span></button>
    <button class="app"><svg viewBox="0 0 24 24"><circle cx="12" cy="12" r="11" fill="#1f4f9e"/><path d="M4 4C12-1 22 4 23 12C18 8 12 8 9 12C5 12 3 8 4 4Z" fill="#4d9be0"/><path d="M7 13l8-3 5 7-9 4Z" fill="#e8e8e8"/><path d="M7 13l7 3 1-6" stroke="#999" fill="none"/></svg><span>Inbox - thiti...</span></button>
    <button class="app"><svg viewBox="0 0 24 24"><path d="M3 2h18v14l-6 6H3Z" fill="#f5e79e"/><path d="M21 16l-6 6v-6Z" fill="#b9a95a"/></svg><span>Sticky Notes</span></button>
    <button class="app alert"><svg viewBox="0 0 24 24"><rect width="24" height="24" rx="4" fill="#00b900"/><path d="M12 4C17 4 21 7 21 11C21 15 15 19 12 21V18C7 18 3 15 3 11C3 7 7 4 12 4Z" fill="#fff"/><text x="12" y="13" font-size="6" text-anchor="middle" font-weight="700" fill="#00b900" font-family="Roboto">LINE</text></svg><span>LINE</span></button>
    <button class="app"><svg viewBox="0 0 24 24"><circle cx="12" cy="12" r="10" fill="#00aff0"/><circle cx="7" cy="7" r="6" fill="#00aff0"/><circle cx="17" cy="17" r="6" fill="#00aff0"/><text x="12" y="18" font-size="17" font-weight="700" text-anchor="middle" fill="#fff" font-family="Roboto">S</text></svg><span>Skype™ - thi...</span></button>
    <button class="app"><svg viewBox="0 0 24 24"><rect x="1" y="1" width="22" height="22" rx="2" fill="#f4f4f4"/><path d="M9 7l-5 5 5 5M15 7l5 5-5 5" fill="none" stroke="#3c3c8c" stroke-width="3"/></svg><span>1thaiwater30...</span></button>
    <button class="app"><svg viewBox="0 0 24 24"><path d="M1 1h22v22H1z" fill="#9b3fc0"/><path d="M1 1h14L1 16Z" fill="#f0417a"/><path d="M23 23H8L23 6Z" fill="#1b6fe0"/><path d="M4 4h16v16H4z"/><text x="7" y="13" font-size="9" fill="#fff" font-weight="700" font-family="Roboto">IJ</text><path d="M6 17h7" stroke="#fff" stroke-width="1.500"/></svg><span>comparePg...</span></button>
    <button class="app"><svg viewBox="0 0 24 24"><circle cx="10" cy="12" r="10" fill="#f7941e"/><circle cx="13" cy="12" r="10" fill="#2c2255"/><path d="M4 9h18M3 12h20M4 15h18" stroke="#e8e6f2" stroke-width="1.800"/></svg><span>workspace - ...</span></button>
    <button class="app"><svg viewBox="0 0 24 24"><circle cx="12" cy="12" r="12" fill="#45a578"/><g fill="none" stroke="#e9f7ef" stroke-width="1.200"><ellipse cx="12" cy="12" rx="3.500" ry="9"/><ellipse cx="12" cy="12" rx="3.500" ry="9" transform="rotate(60 12 12)"/><ellipse cx="12" cy="12" rx="3.500" ry="9" transform="rotate(120 12 12)"/></g></svg><span>index.md pr...</span></button>
    <button class="app"><svg viewBox="0 0 24 24"><ellipse cx="12" cy="9" rx="10" ry="6" fill="#fff" stroke="#d3263c" stroke-width="2.500" transform="rotate(-25 12 9)"/><path d="M8 8l9 9M20 13l-9 4" stroke="#8fa3b5" stroke-width="2"/><circle cx="15" cy="20" r="2.500" fill="none" stroke="#2f83d6" stroke-width="2"/><circle cx="20" cy="18" r="2.500" fill="none" stroke="#2f83d6" stroke-width="2"/></svg><span>Snipping Tool</span></button>
    <button class="app"><svg><use href="#moba"/></svg><span>web.thaiwat...</span></button>
    <button class="app"><svg><use href="#moba"/></svg><span>MobaXterm ...</span></button>
  </div>
  <div class="tray">
    <svg viewBox="0 0 16 16"><path d="M2 11l6-6 6 6" fill="none" stroke="#fff" stroke-width="1.500"/></svg>
    <svg viewBox="0 0 16 16"><path d="M4.500 1L8 3.500 4.500 6 1 3.500ZM11.500 1L15 3.500 11.500 6 8 3.500ZM4.500 6L8 8.500 4.500 11 1 8.500ZM11.500 6L15 8.500 11.500 11 8 8.500ZM8 10l3.500 2.500L8 15l-3.500-2.500Z" fill="#fff"/></svg>
    <svg viewBox="0 0 16 16"><path d="M5 3.500h10v8H5M2 2v6M.500 2h4v3h-4M8 14h6M11 11v3" fill="none" stroke="#fff" stroke-width="1.200"/></svg>
    <svg viewBox="0 0 16 16"><path d="M1 6h3l4-4v12l-4-4H1ZM10 5.500q2 2.500 0 5M12 4q3 4 0 8M14 2.500q3.500 5.500 0 11" fill="none" stroke="#fff"/></svg>
    <span>ENG</span>
    <time>14:44<br>17/4/2561</time>
  </div>
</footer>
<script src="markers.js"></script>
</body>
</html>
```
FILE: styles.css
```css
* { box-sizing: border-box; }
body { margin: 0; height: 100vh; display: flex; flex-direction: column; overflow: hidden; font: 12px/16px "Open Sans", "Noto Sans", sans-serif; color: #333; background: #fff; }
a { text-decoration: none; color: inherit; }
button { border: 0; padding: 0; background: none; font: inherit; color: inherit; }
svg { display: block; flex: none; }
.defs { position: absolute; }

/* browser chrome */
.browser { flex: none; background: #202340; color: #fff; }
.titlebar { height: 29px; display: flex; justify-content: space-between; }
.menus { display: flex; gap: 12px; padding: 2px 6px; }
.window-controls { display: flex; gap: 34px; padding-right: 17px; align-items: center; }
.window-controls svg { width: 12px; height: 12px; }
.tabs { height: 32px; display: flex; }
.tab { width: 225px; display: flex; align-items: center; gap: 6px; padding: 0 12px 0 9px; border-right: 1px solid #55576c; background-clip: padding-box; white-space: nowrap; }
.tab > svg { width: 16px; height: 16px; }
.tab span { flex: 1; overflow: hidden; line-height: 24px; }
.tab .fade { mask-image: linear-gradient(90deg, #000 80%, transparent); }
.tab button { color: #c9c9d3; }
.tab button svg { width: 11px; height: 11px; }
.tab.active { background: #f9f9fa; color: #0c0c0d; border: 0; border-top: 3px solid #0a84ff; padding-bottom: 3px; }
.tab.active button { color: #444; }
.new-tab { width: 34px; display: grid; place-items: center; }
.new-tab svg { width: 14px; height: 14px; }
.toolbar { height: 41px; display: flex; align-items: center; background: #f9f9fa; border-bottom: 1px solid #ccc; padding: 0 3px; }
.toolbar svg { width: 16px; height: 16px; }
.back { width: 34px; height: 34px; border: 1px solid #b5b5b5; border-radius: 50%; display: grid; place-items: center; background: #fff; }
.forward { padding: 0 8px; }
.urlbar { flex: 1; height: 30px; margin-left: 117px; margin-right: 14px; display: flex; align-items: center; gap: 12px; padding: 0 6px 0 8px; background: #fff; border: 1px solid #c4c4c4; border-radius: 2px; }
.url { flex: 1; border: 0; padding: 0; outline: 0; font: 14px/20px "Noto Sans", sans-serif; margin-left: -3px; background: linear-gradient(90deg, #777 31px, #0c0c0d 31px 119px, #777 119px); background-clip: text; -webkit-background-clip: text; -webkit-text-fill-color: transparent; }
.urlbar + button { margin-right: 16px; }
.extensions { display: flex; align-items: center; gap: 16px; margin-left: 128px; }
.counter { position: relative; }
.counter b { position: absolute; left: -6px; top: -7px; background: #00a4e4; color: #fff; font: 700 11px/17px Roboto, sans-serif; padding: 0 2px; }
.menu-btn { border-left: 1px solid #d5d5d5; height: 34px; margin-left: -6px; padding: 0 8px 0 12px; }

/* web page */
.viewport { flex: 1; min-height: 0; display: flex; position: relative; }
.page { flex: 1; min-width: 0; overflow: hidden; border-left: 1px solid #d0cfe0; }
.scrollbar { width: 17px; background: #f0f0f0; display: flex; flex-direction: column; }
.scrollbar svg { width: 17px; height: 17px; }
.thumb { height: 111px; margin-right: 1px; background: #cdcdcd; }
.down { margin-top: auto; }
.site-header { position: relative; height: 50px; margin-left: -1px; display: flex; align-items: center; justify-content: space-between; background: #033274; box-shadow: 0 1px 4px rgba(0,0,0,.6); padding: 0 15px 0 59px; }
.emblem { position: absolute; left: 32px; top: 0; width: 330px; height: 50px; }
.brand { position: relative; display: flex; align-items: center; gap: 10px; color: #fff; font: 700 26px/50px "Noto Sans Thai", "Noto Sans", sans-serif; }
.brand svg { width: 35px; height: 47px; }
.site-nav { display: flex; align-items: center; gap: 30px; color: #a9c4e2; font-size: 12px; line-height: 24px; }
.lang svg { width: 28px; height: 11px; }
.lang { margin-left: -6px; }
.quick-links { display: flex; justify-content: flex-end; padding: 12px 15px 0 0; font-size: 12px; line-height: 22px; color: #3b8ac4; }
.quick-links a + a { border-left: 1px solid #ccc; margin: 4px 0 4px 10px; padding-left: 6px; line-height: 14px; }
.content { display: grid; grid-template-columns: 181px minmax(0, 691fr) minmax(0, 1010fr); padding-right: 20px; }
.rail { padding: 8px 0 0 80px; width: 176px; display: grid; grid-auto-rows: 52px; justify-items: center; align-content: start; color: #bdbbbd; }
.rail a { display: grid; align-items: center; }
.rail svg { width: 34px; height: 30px; }
.rail .tall { height: 34px; }
.map-title { margin: 0; height: 71px; padding: 18px 0 0 8px; display: flex; align-items: center; color: #032f70; }
.map-title svg { width: 24px; height: 32px; }
.map-title b { font: 700 24px/36px "Noto Sans", sans-serif; margin: 0 10px 0 15px; }
.map-title small { font: 300 16px/30px "Noto Sans", sans-serif; color: #777; }
.map { position: relative; height: 700px; background: #90cccb; overflow: hidden; }
.map-art { width: 100%; height: 100%; }
.land { fill: #f7f6f1; stroke: #c5d5cf; stroke-width: 2; }
.water { fill: #90cccb; }
.forest { fill: #b1c19b; }
.roads { fill: none; stroke: #cfcbd6; stroke-width: 3; }
.provinces { fill: none; stroke: #b5a9a9; stroke-width: 4; stroke-dasharray: 18 6; }
.nations { fill: none; stroke: #4c6c7a; stroke-width: 7; stroke-linejoin: round; }
.maritime { fill: none; stroke: #6d7784; stroke-width: 4; }
.maritime .dash { stroke-width: 2; stroke-dasharray: 24 9; }
.labels { font: 600 30px "Noto Sans", sans-serif; text-anchor: middle; fill: #a09ea8; stroke: #fff; stroke-width: 6; paint-order: stroke; stroke-linejoin: round; }
.labels .start { text-anchor: start; }
.labels .country { font-size: 36px; font-weight: 700; fill: #3f2d57; }
.stars { fill: #4a4a52; }
#markers { stroke: #fff; stroke-width: 5; paint-order: stroke; }
.m0 { fill: #a8d0ff; } .m10 { fill: #9eefb3; } .m20 { fill: #66c803; } .m35 { fill: #f6d300; } .m50 { fill: #ff8a00; } .m70 { fill: #c96400; } .m90 { fill: #ef131e; }
.attribution { position: absolute; right: 0; bottom: 0; margin: 0; padding: 0 5px; background: rgba(255,255,255,.7); font: 11px/17px "Liberation Sans", sans-serif; }
.attribution a { color: #0078a8; }
.legend { display: grid; grid-template-columns: 207fr 56fr 71fr 72fr 71fr 71fr 72fr 71fr; height: 17px; color: #fff; text-align: center; }
.legend i { font: 14px/17px Roboto, sans-serif; }
.legend span { color: #333; font: 14px/20px "Noto Sans", sans-serif; }
.l0 { background: #a8d0ff; } .l10 { background: #9eefb3; } .l20 { background: #66c803; } .l35 { background: #f6d300; } .l50 { background: #ff8a00; } .l70 { background: #c96400; } .l90 { background: #ef131e; }
.radar { width: 100%; height: 47px; margin-top: 3px; display: flex; align-items: center; justify-content: center; gap: 8px; border: 1px solid #337ab7; border-radius: 4px; background: #fff; color: #032f70; font: 700 18px/28px "Noto Sans", sans-serif; }
.radar svg { width: 18px; height: 18px; }

.data-col { padding: 31px 0 0 30px; }
.filter { position: relative; width: 142px; height: 33px; margin: 0 6px 13px auto; }
.filter select { appearance: none; width: 100%; height: 100%; border: 1px solid #ccc; background: #fff; border-radius: 0; padding: 0 0 0 15px; font: 11px "Noto Sans", sans-serif; color: #555; }
.filter svg { position: absolute; right: 1px; top: 1px; width: 17px; height: 31px; pointer-events: none; }
.table-wrap { position: relative; }
table { width: 100%; border-collapse: collapse; table-layout: fixed; font: 12px/20px Roboto, "Noto Sans", sans-serif; border-bottom: 2px solid #111; }
.c1 { width: 359px; } .c2 { width: 280px; } .c4 { width: 131px; }
th { height: 40px; padding: 0; background: #0b69e7; color: #fff; font-weight: 400; }
th button { width: 100%; display: flex; align-items: center; padding: 0 8px 0 22px; font-size: 13px; }
th span { flex: 1; }
th svg { width: 14px; height: 14px; color: #3d88ec; }
th .sorted svg { color: #9dc3f5; }
td { height: 29px; padding: 1px 5px 0; border-top: 1px solid #ddd; white-space: nowrap; }
tr:nth-child(5n+2) td, tr:nth-child(5n+5) td { height: 30px; }
tbody tr:nth-child(odd) { background: #f9f9f9; }
tbody tr.hover { background: #f5f5f5; }
td a { color: #3b8ac4; }
.hover a { color: #7fb0d8; }
td:nth-child(3) { text-align: center; padding-right: 17px; font-size: 14px; }
td:nth-child(4) { text-align: right; padding-right: 20px; background: #f9f9f9; }
tr:nth-child(odd) td:nth-child(4) { background: #f1f1f1; }
tr.hover td:nth-child(4) { background: #eaeaea; }
td b { display: inline-block; padding: 0 7px; border-radius: 9px; font: 700 14px/18px Roboto, sans-serif; color: #333; vertical-align: middle; }
.tooltip { position: absolute; left: 49px; top: 76px; border: 1px solid #767676; background: #fff; color: #000; padding: 2px 6px; font: 11px/17px "Open Sans", sans-serif; white-space: nowrap; }
.status { position: absolute; left: 0; bottom: 0; padding: 3px 8px 2px 4px; border: 1px solid #d0d0d0; border-left: 0; border-bottom: 0; background: #f9f9fa; color: #333; font-size: 11px; }

/* desktop taskbar */
.taskbar { flex: none; height: 40px; display: flex; background: #020408; color: #fff; }
.sys { width: 48px; display: grid; place-items: center; }
.sys svg { width: 16px; height: 16px; }
.sys.folder svg { width: 22px; height: 18px; }
.apps { flex: 1; display: grid; grid-template-columns: repeat(13, minmax(0, 1fr)); column-gap: 1px; padding-left: 1px; }
.app { display: flex; align-items: center; gap: 6px; margin: 0 4px; padding: 0 2px 0 5px; border-bottom: 2px solid #76b9ed; text-align: left; font-size: 11px; }
.app.current, .app.alert { margin: 0; padding: 0 6px 0 9px; }
.app.current { background: #38393d; }
.app.alert { background: #99541b; border-color: #ff6a00; }
.app svg { width: 24px; height: 24px; }
.app span { white-space: nowrap; line-height: 24px; }
.tray { display: flex; align-items: center; gap: 8px; padding: 0 10px 0 6px; font-size: 11px; }
.tray svg { width: 16px; height: 16px; }
.tray time { margin-left: 7px; text-align: center; line-height: 18px; }
```
FILE: markers.js
```js
// Rain gauge positions on the map, grouped by 24-hour rainfall threshold.
const gauges = {
  m0: "650,112 655,122 602,210 583,262 596,265 612,268 640,250 650,280 640,262 655,290 672,268 686,262 683,248 690,240 705,238 715,232 722,262 715,270 728,240 700,250 650,330 692,320 700,340 725,318 735,312 690,372 700,385 700,405 755,360 790,355 812,352 820,362 830,350 822,385 755,405 822,412 825,425 765,450 778,455 805,435 812,450 820,472 738,490 780,495 718,515 706,525 850,535 738,570 770,582 812,600 798,608 812,630 818,642 744,652 850,660 870,610 738,762 650,788 672,820 710,812 740,834 795,840 838,820 880,824 770,882 695,895 740,948 768,932 812,928 890,742 897,780 945,795 954,826 990,830 906,890 1018,875 1022,892 994,914 1036,834 995,720 984,642 1010,130 840,190 870,150 905,150 930,150 960,150 870,190 920,190 945,220 990,150 1015,150 1000,180 970,180 940,180 880,170 810,150 820,200 740,140 760,150 845,260 830,245 890,250 945,255 970,225 980,140 900,60 870,30 780,30 1147,345 1212,373 1258,350 1302,337 1338,303 1347,347 1305,395 1218,438 1185,495 1172,543 1167,593 1126,608 1084,627 1149,632 1113,658 1194,667 1045,672 1254,605 1257,655 1261,672 1305,487 1344,471 1410,460 1431,485 1443,558 1476,568 1398,621 1452,660 1431,708 1431,725 1587,675 1317,736 1417,762 1227,758 1213,780 1170,750 1092,747 1272,787 1311,843 1227,865 1521,853 1096,885 1090,895 1025,895 1173,950 1080,385 1088,420 1113,430 1105,440 1114,455 1050,390 1060,410 1150,975 801,1063 773,1111 800,1120 813,1145 822,1194 798,1232 792,1242 748,1312 768,1308 750,1320 740,1352 738,1382 645,1490 651,1486 624,1608 610,1645 606,1700 600,1690 625,1735 615,1735 606,1733 628,1725 612,1765 612,1777 657,1708 675,1715 685,1720 678,1722 700,1670 680,1680 690,1690 711,1697 795,1648 780,1675 1066,1087 1120,1070 1112,1110 1170,1130 1168,1208 1086,1975 1095,2045 972,1000 995,1015 917,990 890,945",
  m10: "558,138 618,150 625,158 740,110 770,90 770,140 740,150 740,200 750,190 730,230 755,235 770,245 650,260 790,170 795,190 810,200 820,150 830,110 845,100 864,112 880,60 886,148 888,180 870,30 890,220 905,235 880,225 925,222 950,180 955,170 975,130 1002,208 945,195 968,205 870,260 880,275 885,262 790,315 765,300 770,310 735,325 848,360 682,385 715,430 738,598 746,622 930,395 967,382 852,455 935,638 918,658 820,700 820,720 858,775 645,840 985,855 993,850 985,958 1040,1030 950,485 1000,480 882,948 950,970 940,260 765,10 815,8 740,20 1065,382 1050,405 1103,382 1133,370 1143,382 1172,400 1302,303 1383,312 1344,442 1080,500 1035,480 1100,547 1068,648 1113,684 1083,912 1095,960 1145,970 1134,990 1165,972 1089,1096 1122,1090 1145,1090 1153,1115 1198,1140 1153,1170 598,1668 630,1668",
  m20: "594,127 600,203 643,188 658,215 676,212 690,132 705,102 714,152 700,170 740,85 765,65 728,105 745,100 795,40 820,60 830,80 838,138 855,160 810,185 872,65 893,112 905,52 888,35 875,15 975,192 973,255 940,275 962,285 838,320 865,316 910,295 890,305 915,310 984,352 735,308 870,390 862,405 840,398 855,430 838,450 845,440 830,508 848,583 912,583 873,628 963,610 950,592 960,625 1012,590 903,693 928,697 907,740 828,732 844,745 753,800 990,885 958,440 970,442 980,450 978,472 992,460 1002,515 985,540 1035,663 920,930 1045,432 1072,412 1065,530 1098,530 1374,675 1050,812 1188,975 1101,1053 1152,1044 1173,1057 1147,1125 1190,1165 1182,1182 1150,1195 1158,1190 1218,1213 972,1105 618,1667 667,1680 660,1667",
  m35: "783,20 880,20 888,88 770,90 795,110 747,135 770,130 775,140 758,178 771,205 765,257 740,262 717,285 712,292 762,312 797,270 822,322 862,287 900,242 915,305 925,315 932,322 928,560 915,616 957,597 965,590 975,600 1026,425 1018,458 1016,967 1212,493 1104,852 1056,940 950,940 1020,470 1174,1108 1131,1132",
  m50: "727,74 774,117 813,60 845,40 830,45 893,300 908,285 930,358 915,460 862,495 810,524 897,524 928,520 969,525 882,582 993,577 894,610 879,655 990,688 848,705 862,700 1020,485 1010,495 1003,452 1161,472 1050,787 1164,883 905,945 925,972 935,945 892,960",
  m70: "792,88 738,284 816,276 882,505 873,552 990,457 906,957 942,956 1056,970",
  m90: "885,432"
};
const layer = document.getElementById("markers");
for (const [level, list] of Object.entries(gauges)) {
  for (const point of list.split(" ")) {
    const [x, y] = point.split(",");
    const use = document.createElementNS("http://www.w3.org/2000/svg", "use");
    use.setAttribute("href", "#marker");
    use.setAttribute("x", x);
    use.setAttribute("y", y);
    use.setAttribute("class", level);
    layer.append(use);
  }
}
```
